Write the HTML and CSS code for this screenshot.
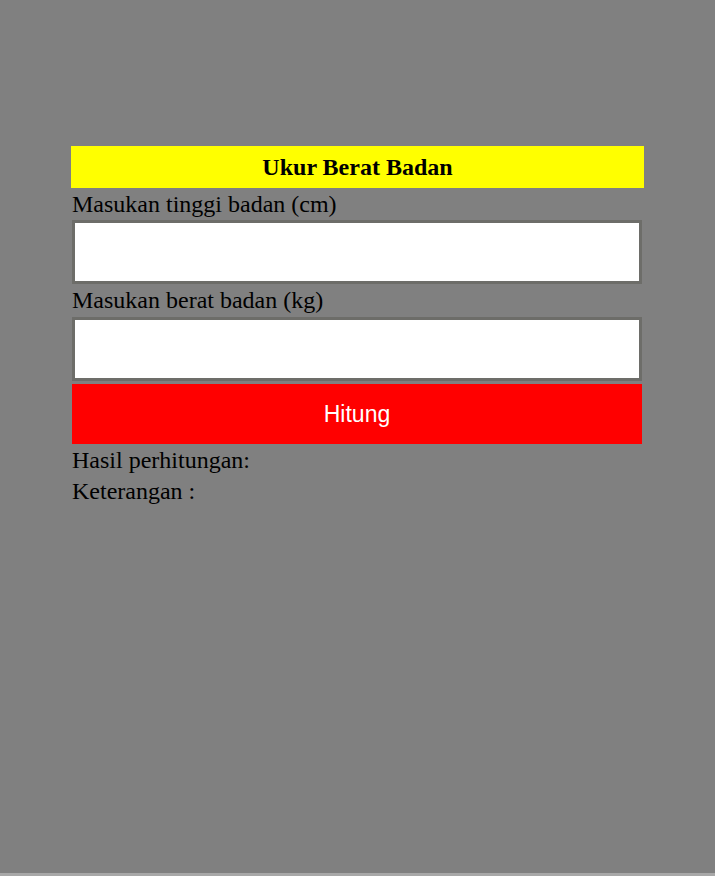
FILE: index.html
```html
<!DOCTYPE html>
<html lang="id">
<head>
<meta charset="utf-8">
<title>Ukur Berat Badan</title>
<link rel="stylesheet" href="styles.css">
</head>
<body>
<div class="page">
  <div class="card">
    <div class="title">Ukur Berat Badan</div>
    <label class="label" for="tinggi">Masukan tinggi badan (cm)</label>
    <input class="field" id="tinggi" type="text">
    <label class="label" for="berat">Masukan berat badan (kg)</label>
    <input class="field" id="berat" type="text">
    <button class="btn" type="button">Hitung</button>
    <div class="result result-first">Hasil perhitungan:</div>
    <div class="result">Keterangan :</div>
  </div>
</div>
</body>
</html>
```
FILE: styles.css
```css
html {
  background: #a8a8a8;
}
body {
  margin: 0;
  font-family: "Liberation Serif", "Times New Roman", serif;
  color: #000;
}
.page {
  background: #808080;
  height: 873px;
  padding-top: 146px;
  box-sizing: border-box;
}
.card {
  width: 573px;
  margin: 0 auto;
  display: flex;
  flex-direction: column;
}
.title {
  background: #ffff00;
  height: 42px;
  line-height: 42px;
  text-align: center;
  font-weight: bold;
  font-size: 24px;
}
.label {
  display: block;
  font-size: 24px;
  line-height: 32px;
  height: 32px;
  padding-left: 1px;
}
.label + .field + .label {
  height: 33px;
  line-height: 33px;
}
.field {
  display: block;
  width: 570px;
  height: 64px;
  margin: 0 0 0 1px;
  box-sizing: border-box;
  border: 3px solid #6d6d69;
  background: #fff;
  padding: 0;
}
.btn {
  display: block;
  width: 570px;
  height: 60px;
  margin: 3px 0 0 1px;
  border: none;
  background: #ff0000;
  color: #fff;
  font-family: "Liberation Sans", Arial, sans-serif;
  font-size: 23px;
  padding: 0;
}
.result {
  font-size: 24px;
  line-height: 30px;
  padding-left: 1px;
}
.result-first {
  padding-top: 1px;
  line-height: 31px;
}
```
